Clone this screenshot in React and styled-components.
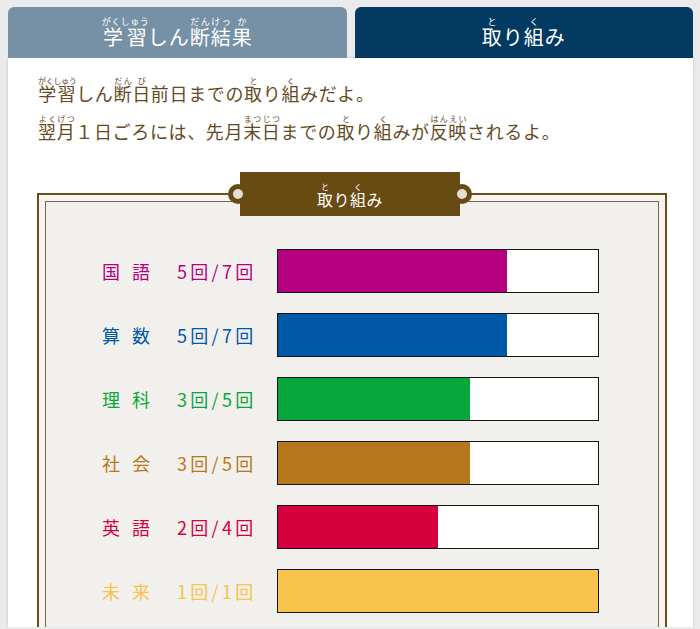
import React from "react";
import styled, { createGlobalStyle } from "styled-components";

const Global = createGlobalStyle`
  html, body {
    margin: 0;
    padding: 0;
    background: #ebebeb;
    overflow: hidden;
  }
  body {
    font-family: "Noto Sans CJK JP", "Noto Sans", sans-serif;
  }
  rt {
    line-height: 1;
  }
`;

const Page = styled.div`
  width: 685px;
  padding: 7px 0 0 8px;
`;

const TabBar = styled.div`
  display: flex;
  gap: 8px;
  height: 51px;
`;

const Tab = styled.div`
  flex: 1;
  display: flex;
  align-items: center;
  justify-content: center;
  padding-top: 4px;
  box-sizing: border-box;
  border-radius: 6px 6px 0 0;
  background: ${(p) => (p.$active ? "#023a62" : "#7691a6")};
  color: #ffffff;
  font-size: 20px;
  letter-spacing: 1px;
  line-height: 30px;
  rt {
    font-size: 9px;
    letter-spacing: 0.5px;
  }
`;

const Card = styled.div`
  height: 569px;
  overflow: hidden;
  background: #ffffff;
  box-shadow: 0 0 3px rgba(0, 0, 0, 0.18);
  padding: 16px 25px 0 30px;
  box-sizing: border-box;
`;

const Intro = styled.div`
  color: #664a1f;
  font-size: 18px;
  letter-spacing: 0.65px;
  line-height: 38px;
  rt {
    font-size: 8px;
    letter-spacing: -0.3px;
  }
`;

const FrameWrap = styled.div`
  position: relative;
  margin-top: 43px;
  width: 630px;
  margin-left: -1px;
`;

const Frame = styled.div`
  border: 2px solid #6b4e1e;
  background: #f7f5f1;
  padding: 6px;
`;

const FrameInner = styled.div`
  border: 1px solid #7d6644;
  background: #f2f0ec;
  padding: 47px 0 40px 56px;
  display: flex;
  flex-direction: column;
  gap: 20px;
`;

const Tag = styled.div`
  position: absolute;
  top: -21px;
  left: 203px;
  width: 220px;
  height: 44px;
  background: #684a13;
  color: #ffffff;
  display: flex;
  align-items: center;
  justify-content: center;
  padding-top: 5px;
  box-sizing: border-box;
  font-size: 16px;
  line-height: 24px;
  letter-spacing: 0.5px;
  rt {
    font-size: 8px;
  }
`;

const Notch = styled.span`
  position: absolute;
  top: 12px;
  ${(p) => (p.$side === "left" ? "left: -12px;" : "right: -12px;")}
  width: 20px;
  height: 20px;
  border-radius: 50%;
  background: #684a13;
  display: flex;
  align-items: center;
  justify-content: center;
  &::after {
    content: "";
    width: 10px;
    height: 10px;
    border-radius: 50%;
    background: #e4ddd2;
  }
`;

const Row = styled.div`
  display: flex;
  align-items: center;
  height: 44px;
`;

const Subject = styled.span`
  width: 75px;
  color: ${(p) => p.$color};
  font-size: 18px;
  letter-spacing: 12px;
  white-space: nowrap;
`;

const Count = styled.span`
  width: 100px;
  color: ${(p) => p.$color};
  font-size: 18px;
  letter-spacing: 3.3px;
  white-space: nowrap;
`;

const Bar = styled.div`
  width: 322px;
  height: 44px;
  box-sizing: border-box;
  border: 1px solid #141414;
  background: #ffffff;
  display: flex;
`;

const Fill = styled.div`
  height: 100%;
  background: ${(p) => p.$color};
`;

const subjects = [
  { name: "国語", done: 5, total: 7, color: "#b5007f" },
  { name: "算数", done: 5, total: 7, color: "#0058a8" },
  { name: "理科", done: 3, total: 5, color: "#07a73c" },
  { name: "社会", done: 3, total: 5, color: "#b8771b" },
  { name: "英語", done: 2, total: 4, color: "#d6003f" },
  { name: "未来", done: 1, total: 1, color: "#f8c44b" },
];

export default function App() {
  return (
    <>
      <Global />
      <Page>
        <TabBar>
          <Tab>
            <span>
              <ruby>学習<rt>がくしゅう</rt></ruby>しん
              <ruby>断<rt>だん</rt></ruby>
              <ruby>結<rt>けっ</rt></ruby>
              <ruby>果<rt>か</rt></ruby>
            </span>
          </Tab>
          <Tab $active>
            <span>
              <ruby>取<rt>と</rt></ruby>り<ruby>組<rt>く</rt></ruby>み
            </span>
          </Tab>
        </TabBar>
        <Card>
          <Intro>
            <div>
              <ruby>学習<rt>がくしゅう</rt></ruby>しん<ruby>断<rt>だん</rt></ruby>
              <ruby>日<rt>び</rt></ruby>前日までの<ruby>取<rt>と</rt></ruby>り
              <ruby>組<rt>く</rt></ruby>みだよ。
            </div>
            <div>
              <ruby>翌月<rt>よくげつ</rt></ruby>１日ごろには、先月
              <ruby>末日<rt>まつじつ</rt></ruby>までの<ruby>取<rt>と</rt></ruby>り
              <ruby>組<rt>く</rt></ruby>みが<ruby>反映<rt>はんえい</rt></ruby>されるよ。
            </div>
          </Intro>
          <FrameWrap>
            <Frame>
              <FrameInner>
                {subjects.map((s) => (
                  <Row key={s.name}>
                    <Subject $color={s.color}>{s.name}</Subject>
                    <Count $color={s.color}>
                      {s.done}回/{s.total}回
                    </Count>
                    <Bar>
                      <Fill
                        $color={s.color}
                        style={{ width: `${(s.done / s.total) * 100}%` }}
                      />
                    </Bar>
                  </Row>
                ))}
              </FrameInner>
            </Frame>
            <Tag>
              <Notch $side="left" />
              <span>
                <ruby>取<rt>と</rt></ruby>り<ruby>組<rt>く</rt></ruby>み
              </span>
              <Notch $side="right" />
            </Tag>
          </FrameWrap>
        </Card>
      </Page>
    </>
  );
}
